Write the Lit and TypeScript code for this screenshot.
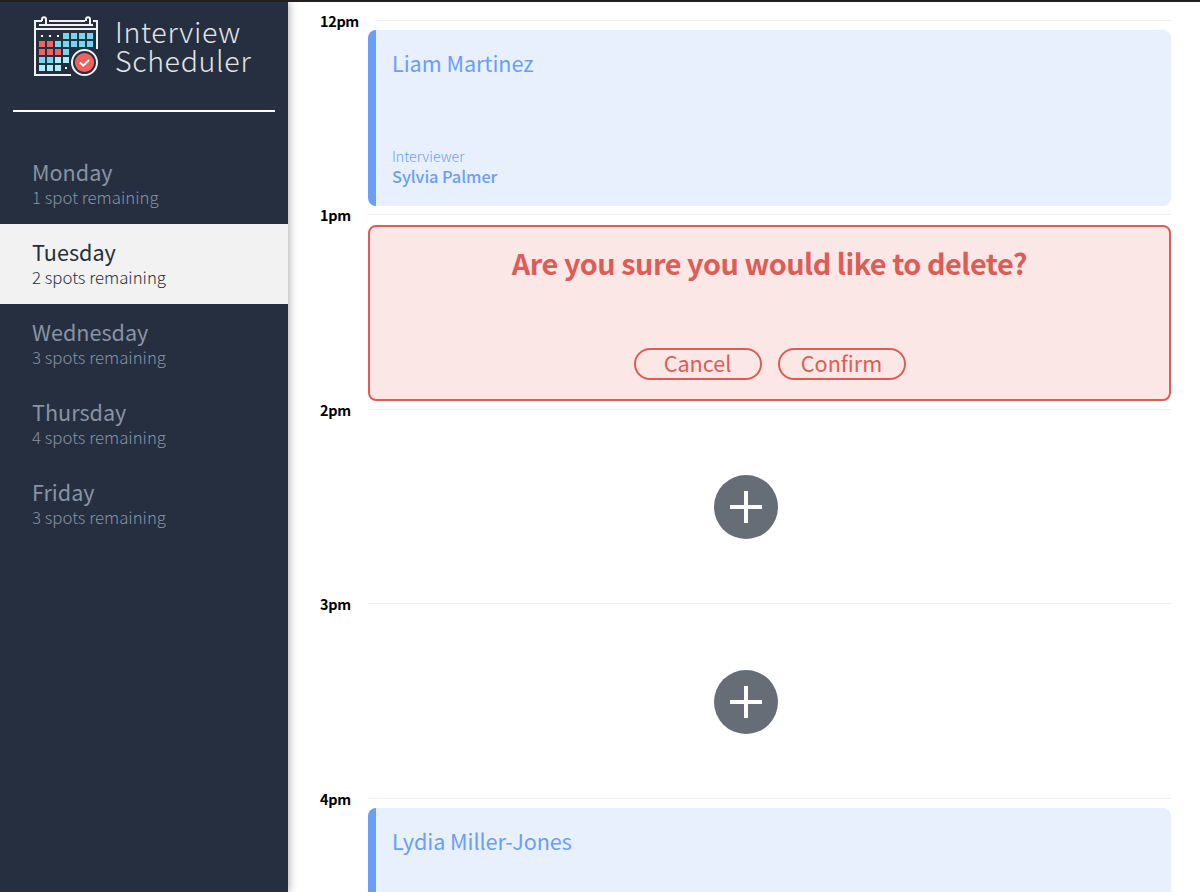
import { LitElement, html, svg, css, nothing } from "lit";
import { customElement, property } from "lit/decorators.js";

const FONT = css`"Source Sans Pro", "Noto Sans CJK SC", "Open Sans", sans-serif`;

interface Day {
  name: string;
  spots: string;
  selected?: boolean;
}

const DAYS: Day[] = [
  { name: "Monday", spots: "1 spot remaining" },
  { name: "Tuesday", spots: "2 spots remaining", selected: true },
  { name: "Wednesday", spots: "3 spots remaining" },
  { name: "Thursday", spots: "4 spots remaining" },
  { name: "Friday", spots: "3 spots remaining" },
];

interface Slot {
  time: string;
  mode: "show" | "confirm" | "empty";
  student?: string;
  interviewer?: string;
}

const SLOTS: Slot[] = [
  { time: "12pm", mode: "show", student: "Liam Martinez", interviewer: "Sylvia Palmer" },
  { time: "1pm", mode: "confirm" },
  { time: "2pm", mode: "empty" },
  { time: "3pm", mode: "empty" },
  { time: "4pm", mode: "show", student: "Lydia Miller-Jones", interviewer: "" },
];

// Calendar squares: b = blue, r = red, p = pale, "." = small dot
const CELLS = ["...bbbb", "rrbbbbb", "rrrb", "bbpp", "ppp."];
const COLORS: Record<string, string> = { b: "#74d7ee", r: "#f0625d", p: "#b0ecf8" };

@customElement("scheduler-logo")
class SchedulerLogo extends LitElement {
  static styles = css`
    :host { display: flex; gap: 15px; height: 64px; }
    .icon { display: block; width: 68px; height: 64px; flex: none; }
    .title {
      margin: 0;
      font: 300 28.6px/29px ${FONT};
      letter-spacing: 0.65px;
      color: #e2e4e6;
      white-space: nowrap;
      padding-top: 2px;
    }
  `;
  render() {
    return html`
      <svg class="icon" viewBox="32 14 68 64">
        <g fill="none" stroke="#f2f2f5" stroke-width="2">
          <path d="M42 21H35V75H71M49 21H85M93 21H97V49M35 29H97M39 25H93" />
          <path d="M46 24V19.2a2 2 0 0 0-4 0V21M90 24V19.2a2 2 0 0 0-4 0V21" />
        </g>
        ${CELLS.map((row, r) =>
          [...row].map((c, i) =>
            c === "."
              ? svg`<rect x=${41 + i * 8} y=${35 + r * 8} width="2" height="2" fill="#fff" />`
              : svg`<rect x=${39 + i * 8} y=${33 + r * 8} width="6" height="6" fill=${COLORS[c]} />`
          )
        )}
        <circle cx="84.5" cy="62.5" r="12.5" fill="#252f3f" stroke="#f2f2f5" stroke-width="2" />
        <circle cx="84.5" cy="62.5" r="9.6" fill="#f0625d" />
        <path d="M80 62.5L83.2 65.6L89 60" fill="none" stroke="#fff" stroke-width="2" />
      </svg>
      <h1 class="title">Interview<br />Scheduler</h1>
    `;
  }
}

@customElement("day-item")
class DayItem extends LitElement {
  @property({ attribute: false }) day!: Day;
  static styles = css`
    .day {
      box-sizing: border-box;
      height: 80px;
      padding: 13px 32px 0;
      color: #8893a4;
      font-family: ${FONT};
    }
    .selected { background: #f2f2f2; color: #252f3f; }
    .name { margin: 0; font-size: 21.6px; line-height: 30px; font-weight: 400; }
    .spots { margin: 0; font-size: 16.8px; line-height: 20px; font-weight: 300; }
  `;
  render() {
    return html`<div class="day ${this.day.selected ? "selected" : ""}">
      <h2 class="name">${this.day.name}</h2>
      <p class="spots">${this.day.spots}</p>
    </div>`;
  }
}

@customElement("time-slot")
class TimeSlot extends LitElement {
  @property({ attribute: false }) slotData!: Slot;
  static styles = css`
    :host { display: block; height: 194.5px; flex: none; font-family: ${FONT}; }
    .header { display: flex; height: 10.2px; align-items: flex-start; }
    .time {
      width: 48px;
      margin: -9px 0 0;
      font-size: 14.4px;
      line-height: 20px;
      font-weight: 700;
      letter-spacing: -0.3px;
      color: #000;
      flex: none;
    }
    .rule { flex: 1; height: 1px; background: #f0f0f0; }
    .rule.first { margin-left: 7px; }
    .card {
      box-sizing: border-box;
      height: 176px;
      margin-left: 48px;
      border-radius: 8px;
      display: flex;
      flex-direction: column;
    }
    .show {
      background: #e8f0fd;
      border-left: 8px solid #6a9ff9;
      color: #6a9ff9;
      padding: 17px 16px 20px;
      justify-content: space-between;
    }
    .student { margin: 0; font-size: 21.6px; line-height: 32px; font-weight: 400; letter-spacing: -0.05px; }
    .label { margin: 0; font-size: 14.2px; line-height: 20px; font-weight: 300; }
    .interviewer { margin: 0; font-size: 16.4px; line-height: 20px; font-weight: 500; letter-spacing: -0.07px; }
    .confirm {
      background: #fbe7e5;
      border: 2px solid #de5c58;
      color: #de5c58;
      align-items: center;
      justify-content: space-between;
      padding: 16px 0 19px;
    }
    .question { margin: 0; font-size: 28.8px; line-height: 40px; font-weight: 700; letter-spacing: -0.46px; }
    .actions { display: flex; gap: 16px; }
    .button {
      box-sizing: border-box;
      width: 128px;
      height: 32px;
      border: 2px solid #de5c58;
      border-radius: 16px;
      background: none;
      padding: 0 0 2px;
      color: inherit;
      font: 400 21.6px/26px ${FONT};
    }
    .empty { justify-content: center; align-items: center; padding-right: 47px; }
    .add { display: block; width: 64px; height: 64px; }
  `;
  private body() {
    const s = this.slotData;
    if (s.mode === "show")
      return html`<article class="card show">
        <h2 class="student">${s.student}</h2>
        ${s.interviewer
          ? html`<section>
              <h4 class="label">Interviewer</h4>
              <h3 class="interviewer">${s.interviewer}</h3>
            </section>`
          : nothing}
      </article>`;
    if (s.mode === "confirm")
      return html`<article class="card confirm">
        <h1 class="question">Are you sure you would like to delete?</h1>
        <div class="actions">
          <button class="button">Cancel</button>
          <button class="button">Confirm</button>
        </div>
      </article>`;
    return html`<article class="card empty">
      <svg class="add" viewBox="0 0 64 64">
        <circle cx="32" cy="32" r="32" fill="#666d77" />
        <path d="M32 16V48M16 32H48" stroke="#fff" stroke-width="4" />
      </svg>
    </article>`;
  }
  render() {
    return html`
      <header class="header">
        <h4 class="time">${this.slotData.time}</h4>
        <div class="rule ${this.slotData.time === "12pm" ? "first" : ""}"></div>
      </header>
      ${this.body()}
    `;
  }
}

@customElement("app-root")
class AppRoot extends LitElement {
  static styles = css`
    :host { display: block; }
    .page {
      box-sizing: border-box;
      display: flex;
      height: 892px;
      overflow: hidden;
      border-top: 2px solid #231f20;
      background: #fff;
    }
    .sidebar {
      position: relative;
      z-index: 1;
      width: 288px;
      flex: none;
      background: #252f3f;
      box-shadow: 1px 0 8px rgba(30, 30, 45, 0.38);
    }
    .brand { padding: 12px 0 0 32px; }
    .divider { height: 2px; margin: 32px 13px 32px; background: #fff; }
    .schedule {
      flex: 1;
      display: flex;
      flex-direction: column;
      padding: 17.9px 29px 0 32px;
      overflow: hidden;
    }
  `;
  render() {
    return html`<main class="page">
      <aside class="sidebar">
        <scheduler-logo class="brand"></scheduler-logo>
        <div class="divider"></div>
        <nav>${DAYS.map((d) => html`<day-item .day=${d}></day-item>`)}</nav>
      </aside>
      <section class="schedule">
        ${SLOTS.map((s) => html`<time-slot .slotData=${s}></time-slot>`)}
      </section>
    </main>`;
  }
}
